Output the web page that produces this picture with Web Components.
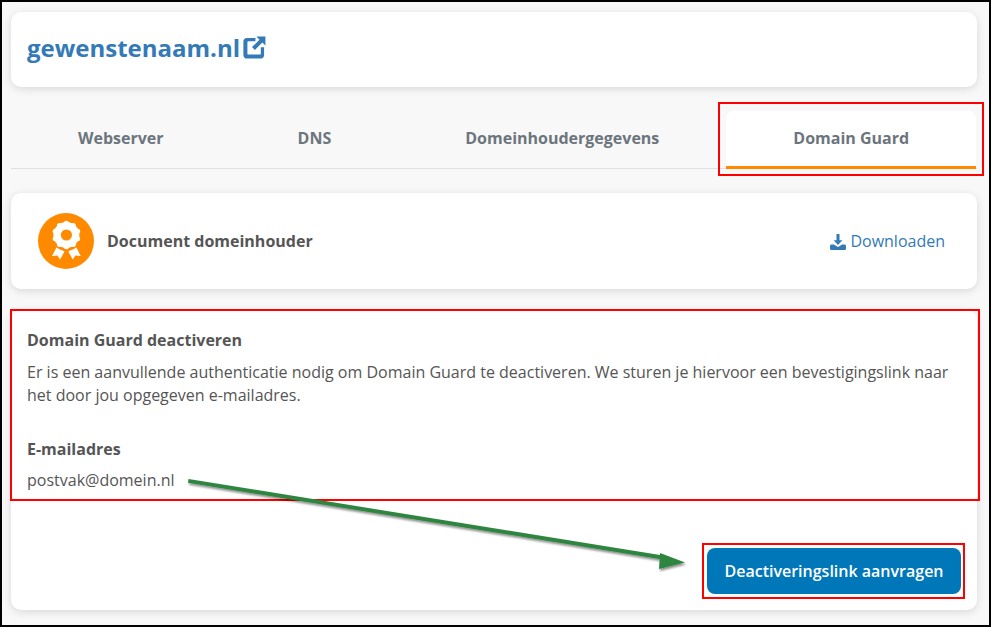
<!DOCTYPE html>
<html lang="nl">
<head>
<meta charset="UTF-8">
<title>Domain Guard</title>
<style>
  html, body { margin: 0; padding: 0; }
  body { font-family: "Open Sans", sans-serif; color: #555; }
</style>
</head>
<body>

<script>
// kleine helper: shadow root met vaste markup
class Base extends HTMLElement {
  constructor(html) {
    super();
    this.attachShadow({ mode: 'open' }).innerHTML = html;
  }
}

class WhiteCard extends Base {
  constructor() {
    super(`<style>
      :host { display: block; background: #fff; border-radius: 10px; box-shadow: 0 2px 8px rgba(0,0,0,.13); }
    </style><slot></slot>`);
  }
}
customElements.define('white-card', WhiteCard);

class DomainHeader extends Base {
  constructor() {
    super(`<style>
      :host { display: block; }
      .in { height: 75px; box-sizing: border-box; padding: 0 0 1px 16px; display: flex; align-items: center; gap: 3px; color: #337ab7; }
      .name { font-size: 24px; font-weight: 700; line-height: 32px; margin-top: -2px; }
      svg { width: 23px; height: 23px; display: block; margin-top: -3px; }
    </style>
    <white-card><div class="in">
      <span class="name"><slot></slot></span>
      <svg viewBox="0 0 24 24"><path fill="#337ab7" d="M4 2h9v3.400H5.600c-.6 0-1 .4-1 1v12c0 .6.4 1 1 1h12c.6 0 1-.4 1-1v-6.600h3.400v8.200c0 2-1.600 3.600-3.600 3.600H4c-2 0-3.600-1.600-3.600-3.600V5.600C.4 3.600 2 2 4 2z"/><path fill="#337ab7" d="M14 .6h9.400V10l-3.200-3.200-7.800 7.800-3-3 7.800-7.800z"/></svg>
    </div></white-card>`);
  }
}
customElements.define('domain-header', DomainHeader);

class TabBar extends Base {
  constructor() {
    super(`<style>
      :host { display: flex; height: 58px; margin-top: 24px; padding-right: 1px; box-shadow: inset 0 -1px 0 #dfdfe4; }
    </style><slot></slot>`);
  }
}
customElements.define('tab-bar', TabBar);

class TabItem extends Base {
  constructor() {
    super(`<style>
      :host { flex: 1 1 auto; display: flex; align-items: center; justify-content: center; box-sizing: border-box; padding: 0 67px 2px; font-size: 16px; font-weight: 700; color: #6c757d; border-bottom: 3px solid transparent; border-radius: 8px 8px 0 0; white-space: nowrap; }
      :host([active]) { background: #fff; border-bottom-color: #ff8a00; }
    </style><slot></slot>`);
  }
}
customElements.define('tab-item', TabItem);

// de rozet: schulpen rond de medaille worden hier berekend
const scallops = Array.from({ length: 10 }, (_, i) => {
  const a = i * Math.PI / 5 - Math.PI / 2;
  return `<circle cx="${(28.4 + 11.8 * Math.cos(a)).toFixed(2)}" cy="${(22 + 11.8 * Math.sin(a)).toFixed(2)}" r="2.500" fill="#fff"/>`;
}).join('');

class DocCard extends Base {
  constructor() {
    super(`<style>
      :host { display: block; margin-top: 24px; }
      .in { height: 96px; display: flex; align-items: center; padding: 0 32px 0 27px; gap: 13px; }
      .badge { width: 56px; height: 56px; flex: none; display: block; }
      .t { font-size: 16px; font-weight: 700; color: #555; flex: 1; }
      .dl { display: flex; align-items: center; gap: 4px; font-size: 16px; color: #337ab7; }
      .dl svg { width: 16px; height: 16px; display: block; margin-top: 1px; }
    </style>
    <white-card><div class="in">
      <svg class="badge" viewBox="0 0 56 56">
        <circle cx="28" cy="28" r="28" fill="#ff8a00"/>
        <path fill="#fff" d="M19 33.500l7.500 5-4.500 8-2.500-4-5.500.5zM37.800 33.500l-7.500 5 4.500 8 2.500-4 5.500.5z"/>
        <circle cx="28.400" cy="22" r="15.800" fill="#ff8a00"/>
        <circle cx="28.400" cy="22" r="13" fill="#fff"/>
        ${scallops}
        <circle cx="28.400" cy="22" r="5.600" fill="#ff8a00"/>
      </svg>
      <div class="t"><slot name="title"></slot></div>
      <div class="dl">
        <svg viewBox="0 0 16 16"><path fill="#337ab7" d="M6.500 0h3v6.200h2.900L8 10.900 3.600 6.200h2.900z"/><path fill="#337ab7" d="M1.600 10.400h2.200L8 13l4.200-2.600h2.200c.9 0 1.600.7 1.600 1.600v2.400c0 .9-.7 1.600-1.600 1.600H1.600C.7 16 0 15.300 0 14.400V12c0-.9.7-1.600 1.600-1.600z"/></svg>
        <slot name="link"></slot>
      </div>
    </div></white-card>`);
  }
}
customElements.define('doc-card', DocCard);

class GuardPanel extends Base {
  constructor() {
    super(`<style>
      :host { display: block; margin-top: 21px; }
      .in { height: 300px; box-sizing: border-box; padding: 19px 16px 16px; display: flex; flex-direction: column; font-size: 16px; line-height: 23px; color: #555; }
      h3 { margin: 0 0 9px; font: 700 16px/23px "Open Sans", sans-serif; }
      p { margin: 0; }
      h4 { margin: 31px 0 8px; font: 700 16px/23px "Open Sans", sans-serif; }
      .foot { margin-top: auto; display: flex; justify-content: flex-end; }
      button { width: 254px; height: 46px; border: 0; border-radius: 8px; background: #0077b9; color: #fff; font: 600 16px "Open Sans", sans-serif; padding: 0; }
    </style>
    <white-card><div class="in">
      <h3><slot name="title"></slot></h3>
      <p><slot name="text"></slot></p>
      <h4><slot name="label"></slot></h4>
      <div><slot name="mail"></slot></div>
      <div class="foot"><button><slot name="action"></slot></button></div>
    </div></white-card>`);
  }
}
customElements.define('guard-panel', GuardPanel);

// rode kaders en groene pijl liggen als annotatie over de pagina
class ScreenNotes extends Base {
  constructor() {
    super(`<style>
      :host { position: absolute; left: 0; top: 0; width: 991px; height: 627px; pointer-events: none; }
      .r { position: absolute; box-sizing: border-box; border: 2px solid #f00; }
      svg { position: absolute; left: 0; top: 0; }
    </style>
    <div class="r" style="left:718px;top:102px;width:266px;height:74px"></div>
    <div class="r" style="left:10px;top:309px;width:970px;height:192px"></div>
    <div class="r" style="left:702px;top:543px;width:263px;height:56px"></div>
    <svg width="991" height="627">
      <defs><filter id="s" x="-5%" y="-20%" width="110%" height="150%"><feDropShadow dx="1" dy="2" stdDeviation="1.200" flood-color="#000" flood-opacity=".45"/></filter></defs>
      <g filter="url(#s)" fill="#2e8540">
        <path d="M188.500 479l-.5 3.800 476 77 .5-4z"/>
        <path d="M660 553l25 9.500-26 6.500z"/>
      </g>
    </svg>`);
  }
}
customElements.define('screen-notes', ScreenNotes);

class AppPage extends Base {
  constructor() {
    super(`<style>
      :host { display: block; position: relative; width: 991px; height: 627px; box-sizing: border-box; border: 2px solid #000; background: #f8f8f8; padding: 10px 12px 0 9px; overflow: hidden; }
    </style><slot></slot>`);
  }
}
customElements.define('app-page', AppPage);
</script>

<app-page>
  <domain-header>gewenstenaam.nl</domain-header>
  <tab-bar>
    <tab-item>Webserver</tab-item>
    <tab-item>DNS</tab-item>
    <tab-item>Domeinhoudergegevens</tab-item>
    <tab-item active>Domain Guard</tab-item>
  </tab-bar>
  <doc-card>
    <span slot="title">Document domeinhouder</span>
    <span slot="link">Downloaden</span>
  </doc-card>
  <guard-panel>
    <span slot="title">Domain Guard deactiveren</span>
    <span slot="text">Er is een aanvullende authenticatie nodig om Domain Guard te deactiveren. We sturen je hiervoor een bevestigingslink naar het door jou opgegeven e-mailadres.</span>
    <span slot="label">E-mailadres</span>
    <span slot="mail">postvak@domein.nl</span>
    <span slot="action">Deactiveringslink aanvragen</span>
  </guard-panel>
</app-page>
<screen-notes></screen-notes>

</body>
</html>
